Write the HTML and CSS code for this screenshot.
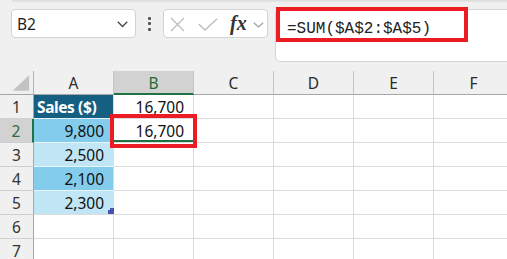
FILE: index.html
```html
<!DOCTYPE html>
<html>
<head>
<meta charset="utf-8">
<link rel="stylesheet" href="styles.css">
</head>
<body>
<div class="app">
  <div class="toolbar">
    <div class="namebox">
      <span class="ref">B2</span>
      <svg class="chev" width="11" height="7" viewBox="0 0 11 7"><path d="M0.8 0.8 L5.5 5.5 L10.2 0.8" fill="none" stroke="#444" stroke-width="1.3"/></svg>
    </div>
    <div class="dots"><span></span><span></span><span></span></div>
    <div class="fxbox">
      <svg class="icon-x" width="15" height="15" viewBox="0 0 15 15"><path d="M1 1 L14 14 M14 1 L1 14" stroke="#bcbcbc" stroke-width="1.3" fill="none"/></svg>
      <svg class="icon-check" width="20" height="13" viewBox="0 0 20 13"><path d="M0.8 6 L7 12 L19.2 0.8" stroke="#bcbcbc" stroke-width="1.3" fill="none"/></svg>
      <span class="fx">fx</span>
      <svg class="chev-sm" width="11" height="6" viewBox="0 0 11 6"><path d="M0.8 0.8 L5.5 5 L10.2 0.8" fill="none" stroke="#a0a0a0" stroke-width="1.2"/></svg>
    </div>
    <div class="formula">
      <span class="ftext">=SUM($A$2:$A$5)</span>
      <span class="mark mark-formula"></span>
    </div>
  </div>
  <div class="sheet">
    <div class="hd corner"><svg width="34" height="23" viewBox="0 0 34 23"><polygon points="30,4 30,20 13,20" fill="#c3c3c3"/></svg></div>
    <div class="hd col">A</div>
    <div class="hd col sel-col">B</div>
    <div class="hd col">C</div>
    <div class="hd col">D</div>
    <div class="hd col">E</div>
    <div class="hd col">F</div>

    <div class="hd row">1</div>
    <div class="c title">Sales ($)</div>
    <div class="c num">16,700</div>
    <div class="c"></div><div class="c"></div><div class="c"></div><div class="c"></div>

    <div class="hd row sel-row">2</div>
    <div class="c num band-dark">9,800</div>
    <div class="c num active">16,700<span class="mark mark-cell"></span></div>
    <div class="c"></div><div class="c"></div><div class="c"></div><div class="c"></div>

    <div class="hd row">3</div>
    <div class="c num band-light">2,500</div>
    <div class="c"></div><div class="c"></div><div class="c"></div><div class="c"></div><div class="c"></div>

    <div class="hd row">4</div>
    <div class="c num band-dark">2,100</div>
    <div class="c"></div><div class="c"></div><div class="c"></div><div class="c"></div><div class="c"></div>

    <div class="hd row">5</div>
    <div class="c num band-light last">2,300<svg class="resize" width="6" height="6" viewBox="0 0 6 6"><polygon points="2,0 6,0 6,6 0,6 0,2 2,2" fill="#4354b3"/></svg></div>
    <div class="c"></div><div class="c"></div><div class="c"></div><div class="c"></div><div class="c"></div>

    <div class="hd row">6</div>
    <div class="c"></div><div class="c"></div><div class="c"></div><div class="c"></div><div class="c"></div><div class="c"></div>

    <div class="hd row">7</div>
    <div class="c"></div><div class="c"></div><div class="c"></div><div class="c"></div><div class="c"></div><div class="c"></div>
  </div>
</div>
</body>
</html>
```

FILE: styles.css
```css
html, body {
  margin: 0;
  padding: 0;
  background: #f0f0f0;
  overflow: hidden;
  font-family: "Noto Sans", "Open Sans", sans-serif;
}

.app {
  width: 507px;
  height: 259px;
  overflow: hidden;
}

.toolbar {
  position: relative;
  box-sizing: border-box;
  height: 71px;
  padding: 9px 0 0 11px;
  display: flex;
  align-items: flex-start;
}

.toolbar::before {
  content: "";
  position: absolute;
  top: 0;
  left: 12px;
  right: 0;
  height: 3px;
  background: linear-gradient(#dadada, #f0f0f0);
}

.namebox {
  box-sizing: border-box;
  width: 125px;
  height: 29px;
  background: #fff;
  border: 1px solid #d4d4d4;
  border-radius: 4px;
  display: flex;
  align-items: center;
  justify-content: space-between;
  padding: 0 7px 0 5px;
  flex: none;
}

.ref {
  font-size: 15.5px;
  color: #1e1e1e;
  line-height: 20px;
}

.chev { display: block; margin-top: 1px; }

.dots {
  width: 27px;
  height: 29px;
  display: flex;
  flex-direction: column;
  align-items: center;
  justify-content: center;
  gap: 2.5px;
  flex: none;
}

.dots span {
  width: 3px;
  height: 3px;
  background: #555;
  border-radius: 1px;
}

.fxbox {
  box-sizing: border-box;
  width: 105px;
  height: 29px;
  background: #fff;
  border: 1px solid #d4d4d4;
  border-radius: 4px;
  display: flex;
  align-items: center;
  padding-left: 6px;
  flex: none;
}

.icon-x { display: block; margin-top: 1px; }
.icon-check { display: block; margin-left: 13px; margin-top: 1px; }

.fx {
  font-family: "Liberation Serif", "DejaVu Serif", serif;
  font-style: italic;
  font-weight: 700;
  font-size: 20px;
  line-height: 20px;
  color: #333;
  margin-left: 12px;
  margin-top: -2px;
}

.chev-sm { display: block; margin-left: 6px; margin-top: 2px; }

.formula {
  position: relative;
  box-sizing: border-box;
  flex: none;
  width: 260px;
  height: 53px;
  margin-left: 7px;
  background: #fff;
  border: 1px solid #d4d4d4;
  border-radius: 5px;
  padding: 6px 0 0 11px;
}

.ftext {
  font-family: "Liberation Mono", "DejaVu Sans Mono", monospace;
  font-size: 16px;
  line-height: 20px;
  color: #222;
}

.mark {
  position: absolute;
  box-sizing: border-box;
  border: 4px solid #ec1c24;
}

.mark-formula {
  left: 0;
  top: -3px;
  width: 192px;
  height: 35px;
}

.sheet {
  display: grid;
  grid-template-columns: 34px repeat(6, 80px);
  grid-auto-rows: 24px;
  width: 514px;
}

.hd {
  box-sizing: border-box;
  background: #f0f0f0;
  color: #2a2a2a;
  font-size: 15.5px;
  display: flex;
  align-items: center;
  justify-content: center;
}

.corner {
  border-right: 1px solid #b4b4b4;
  border-bottom: 1px solid #a6a6a6;
  align-items: flex-start;
  justify-content: flex-start;
}

.corner svg { display: block; }

.col {
  border-right: 1px solid #c4c4c4;
  border-bottom: 1px solid #a6a6a6;
  padding-top: 1px;
}

.row {
  border-right: 1px solid #a6a6a6;
  border-bottom: 1px solid #d0d0d0;
  padding-top: 1px;
  color: #333;
}

.sel-col {
  background: #d2d2d2;
  color: #1d6a3c;
  border-bottom: 2px solid #1f7244;
}

.sel-row {
  background: #d2d2d2;
  color: #2c6a46;
  border-right: 2px solid #1f7244;
}

.c {
  position: relative;
  box-sizing: border-box;
  background: #fff;
  border-right: 1px solid #dcdcdc;
  border-bottom: 1px solid #dcdcdc;
  font-size: 15.5px;
  color: #111;
  display: flex;
  align-items: center;
  padding-top: 1px;
}

.num {
  justify-content: flex-end;
  padding-right: 9px;
}

.title {
  background: #156082;
  color: #fff;
  font-weight: 700;
  padding-left: 3px;
  border-bottom-color: #e6f2f8;
  letter-spacing: -0.4px;
}

.band-dark {
  background: #83cceb;
  border-bottom-color: #e8f5fb;
}

.band-light {
  background: #c0e6f5;
  border-bottom-color: #e8f5fb;
}

.last { border-bottom-color: #dcdcdc; }

.resize {
  position: absolute;
  right: -1px;
  bottom: 0;
  display: block;
}

.active {
  z-index: 3;
  box-shadow: inset 0 -2px 0 #1f7244;
}

.mark-cell {
  left: -4px;
  top: -5px;
  width: 87px;
  height: 34px;
}
```
